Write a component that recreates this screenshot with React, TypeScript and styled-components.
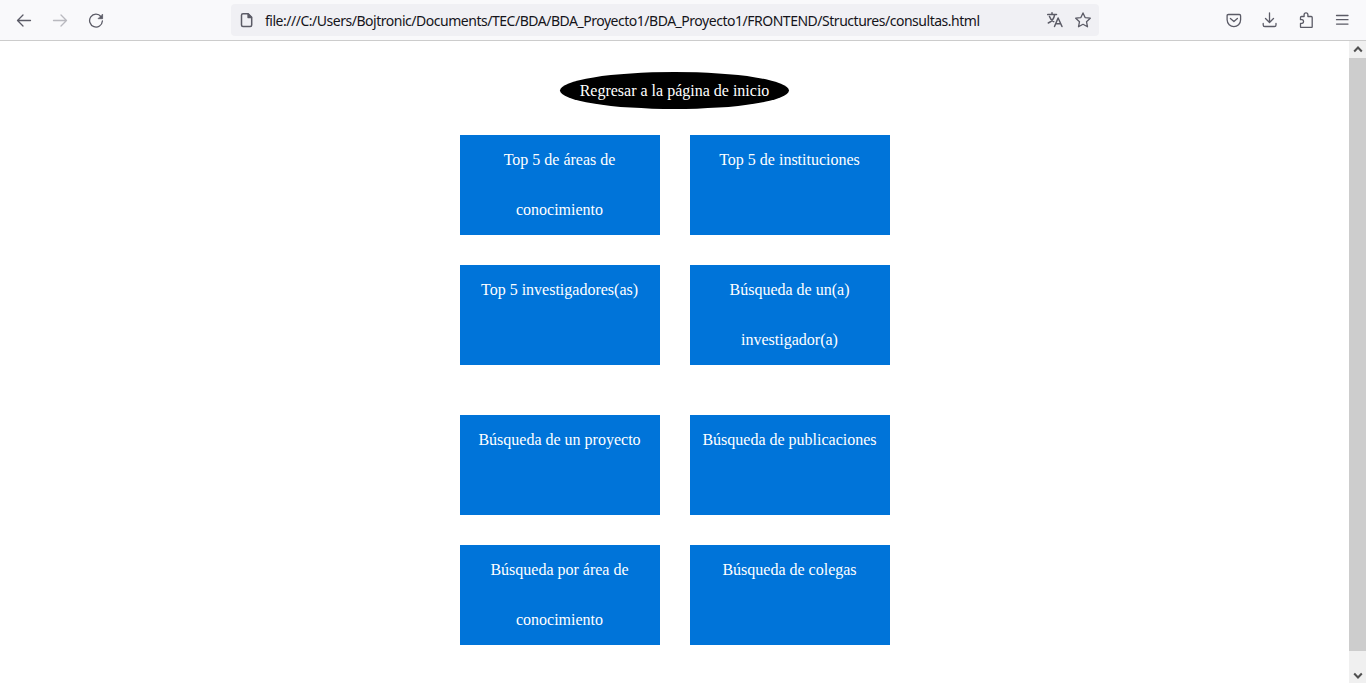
import React from 'react';
import styled, { createGlobalStyle } from 'styled-components';

const GlobalStyle = createGlobalStyle`
  * { box-sizing: border-box; }
  body { margin: 0; background: #fff; overflow: hidden; }
`;

const Window = styled.div`
  display: flex;
  flex-direction: column;
  height: 683px;
`;

const Toolbar = styled.header`
  display: flex;
  align-items: center;
  justify-content: space-between;
  flex: none;
  height: 41px;
  padding: 0 16px;
  background: #f9f9fb;
  border-bottom: 1px solid #cccccc;
`;

const IconGroup = styled.div`
  display: flex;
  gap: 20px;
`;

const Icon = styled.svg<{ $faded?: boolean }>`
  display: block;
  flex: none;
  width: 16px;
  height: 16px;
  fill: none;
  stroke: #5b5b66;
  stroke-width: 1.3;
  stroke-linecap: round;
  stroke-linejoin: round;
  opacity: ${(p) => (p.$faded ? 0.4 : 1)};
`;

const AddressBar = styled.div`
  display: flex;
  align-items: center;
  width: 868px;
  height: 32px;
  padding: 0 8px;
  border-radius: 4px;
  background: #f0f0f4;
`;

const Address = styled.span`
  flex: 1;
  margin: 2px 0 0 10px;
  color: #15141a;
  font: 14px/20px 'Noto Sans', sans-serif;
  letter-spacing: -0.48px;
  white-space: nowrap;
`;

const AddressActions = styled.div`
  display: flex;
  gap: 12px;
`;

const Viewport = styled.div`
  display: flex;
  flex: 1;
  min-height: 0;
`;

const Page = styled.main`
  display: flex;
  flex: 1;
  flex-direction: column;
  align-items: center;
  padding-top: 31px;
  font: 16px 'Liberation Serif', serif;
`;

const HomeLink = styled.a`
  width: 229px;
  height: 37px;
  margin-bottom: 26px;
  border-radius: 50%;
  background: #000;
  color: #fff;
  line-height: 37px;
  text-align: center;
  white-space: nowrap;
`;

const CardGrid = styled.div`
  display: grid;
  grid-template-columns: 200px 200px;
  gap: 30px;
  margin: 0 0 50px 1px;
`;

const Card = styled.a`
  height: 100px;
  padding: 0 11px 0 10px;
  background: #0074d9;
  color: #fff;
  line-height: 50px;
  text-align: center;
`;

const Scrollbar = styled.div`
  display: flex;
  flex-direction: column;
  width: 17px;
  background: #f0f0f0;
`;

const ScrollButton = styled.div`
  display: flex;
  align-items: center;
  justify-content: center;
  flex: none;
  height: 17px;
  svg { display: block; }
`;

const LowerScrollButton = styled(ScrollButton)`
  margin-top: auto;
`;

const ScrollThumb = styled.div`
  height: 593px;
  background: #cdcdcd;
`;

const topQueries = [
  'Top 5 de áreas de conocimiento',
  'Top 5 de instituciones',
  'Top 5 investigadores(as)',
  'Búsqueda de un(a) investigador(a)',
];

const searches = [
  'Búsqueda de un proyecto',
  'Búsqueda de publicaciones',
  'Búsqueda por área de conocimiento',
  'Búsqueda de colegas',
];

export default function App() {
  return (
    <Window>
      <GlobalStyle />
      <Toolbar>
        <IconGroup>
          <Icon><path d="M14.500 8.500h-13M7 3 1.500 8.500 7 14" /></Icon>
          <Icon $faded><path d="M1.500 8.500h13M9 3l5.500 5.500L9 14" /></Icon>
          <Icon>
            <path d="M13 4.600A6.400 6.400 0 1 0 14.400 9" />
            <path d="M14.600 2.500v4.200h-4.200z" fill="#5b5b66" strokeWidth=".8" />
          </Icon>
        </IconGroup>
        <AddressBar>
          <Icon>
            <path d="M4 1.700h5.200l3.500 3.500v7.800q0 1.500-1.500 1.500H4q-1.500 0-1.500-1.500V3.200Q2.500 1.700 4 1.700z" strokeWidth="1.500" />
            <path d="M9 2v3.500h3.500z" fill="#5b5b66" />
          </Icon>
          <Address>file:///C:/Users/Bojtronic/Documents/TEC/BDA/BDA_Proyecto1/BDA_Proyecto1/FRONTEND/Structures/consultas.html</Address>
          <AddressActions>
            <Icon>
              <path d="M.7 2.600h8.800M5 .8v1.800M7.600 2.800C7 6.500 4.500 9.500 1.300 11M2.500 4.500c.8 2.500 2.300 4.200 4.200 5.200M7.500 14.500l3.600-8.500 3.900 8.500M8.800 11.700h5" strokeWidth="1.500" />
            </Icon>
            <Icon>
              <path d="M8 .9l2.100 4.700 5.200.6-3.800 3.500 1 5.100L8 12.300l-4.500 2.500 1-5.100L.7 6.200l5.200-.6z" />
            </Icon>
          </AddressActions>
        </AddressBar>
        <IconGroup>
          <Icon>
            <path d="M2.400 2.500h10.900q1.300 0 1.300 1.300v4q0 3-2 4.900t-4.700 1.900-4.700-1.900-2.100-4.900v-4q0-1.300 1.300-1.300zM4.400 6.500l3.500 3 3.500-3" />
          </Icon>
          <Icon><path d="M7.500.8v9.400M3.500 6.500l4 4 4-4M1.200 11.500v1.400q0 1.600 1.600 1.600h9.600q1.600 0 1.600-1.600v-1.400" /></Icon>
          <Icon>
            <path d="M2.500 5.500q0-1 1-1h2.600V2.800a1.900 1.900 0 0 1 3.800 0v1.700h3.300q1 0 1 1v9.200q0 .8-.8.8H3.300q-.8 0-.8-.8v-3.300h1.600a1.900 1.900 0 0 0 0-3.700H2.500z" />
          </Icon>
          <Icon><path d="M2.500 3.500h11.500M2.500 7.700h11.500M2.500 12.100h11.500" /></Icon>
        </IconGroup>
      </Toolbar>
      <Viewport>
        <Page>
          <HomeLink>Regresar a la página de inicio</HomeLink>
          <CardGrid>
            {topQueries.map((label) => <Card key={label}>{label}</Card>)}
          </CardGrid>
          <CardGrid>
            {searches.map((label) => <Card key={label}>{label}</Card>)}
          </CardGrid>
        </Page>
        <Scrollbar>
          <ScrollButton>
            <svg width="10" height="8"><path d="M1.200 5.500 5 1.500l3.800 4" fill="none" stroke="#505050" strokeWidth="2" /></svg>
          </ScrollButton>
          <ScrollThumb />
          <LowerScrollButton>
            <svg width="10" height="8"><path d="M1.200 2.500 5 6.500l3.800-4" fill="none" stroke="#505050" strokeWidth="2" /></svg>
          </LowerScrollButton>
        </Scrollbar>
      </Viewport>
    </Window>
  );
}
